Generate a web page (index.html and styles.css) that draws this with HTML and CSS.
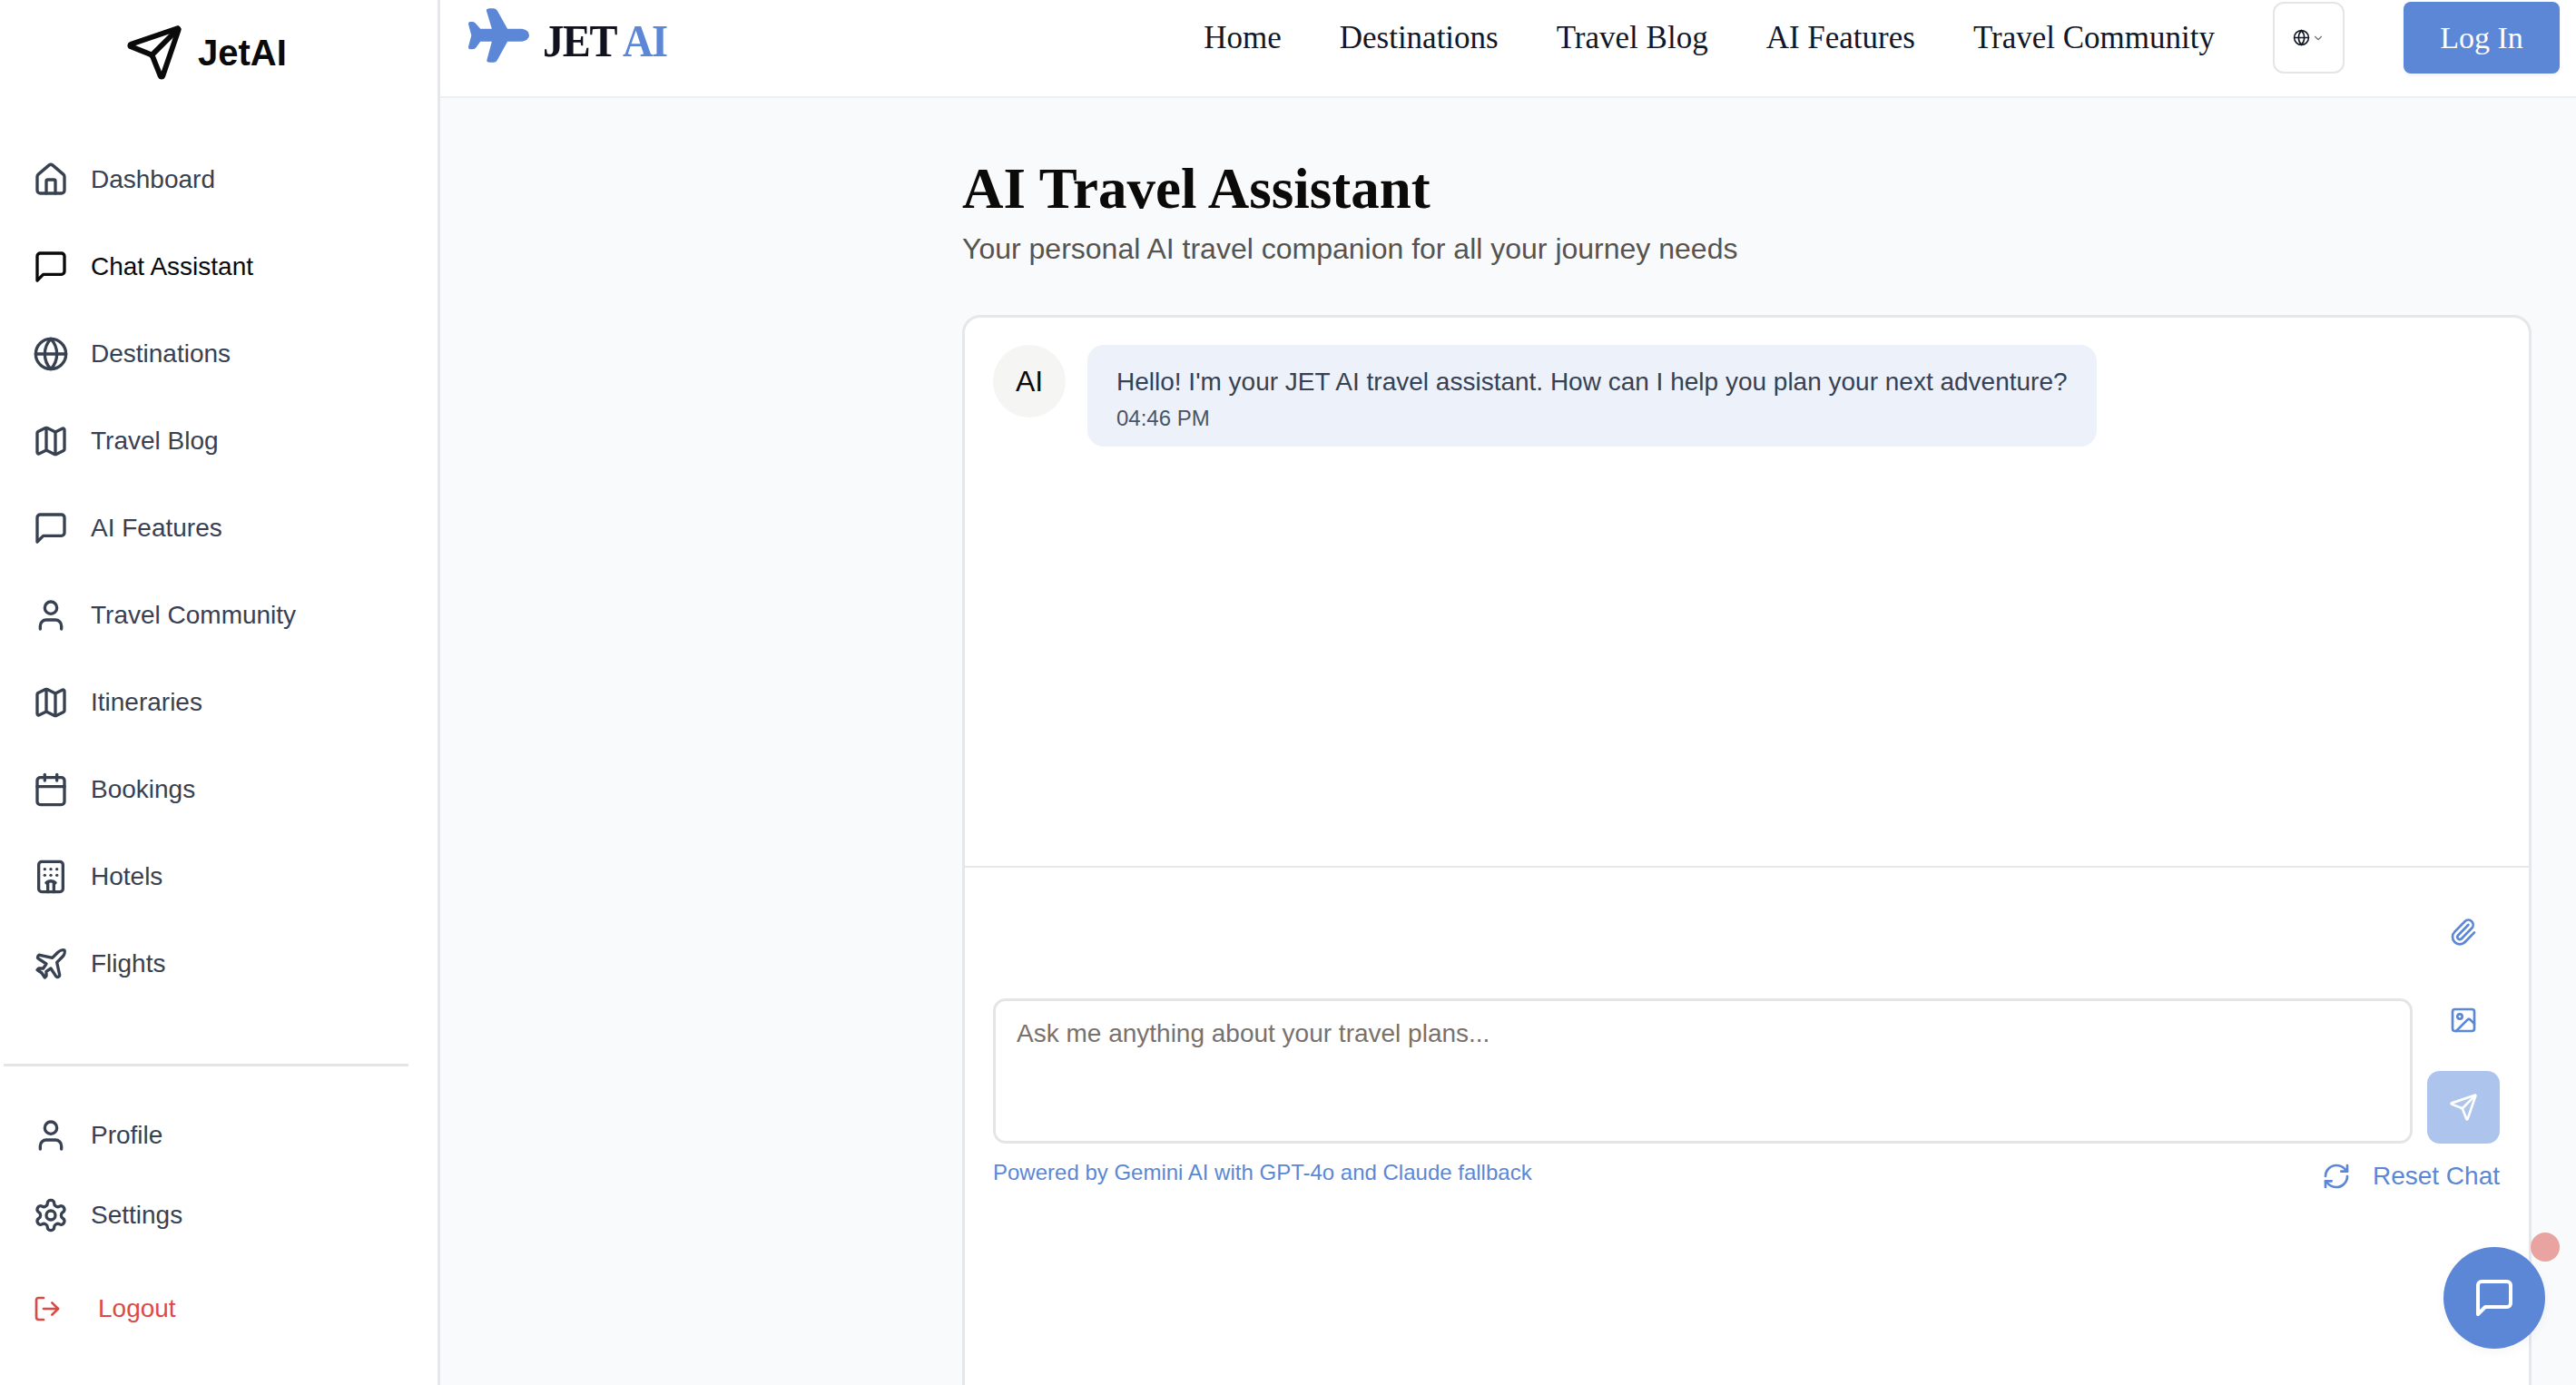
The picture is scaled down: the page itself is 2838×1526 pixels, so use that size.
FILE: index.html
```html
<!DOCTYPE html>
<html>

<head>
    <title>JetAI - Chat Assistant</title>
    <link rel="stylesheet" href="styles.css">
</head>

<body>
    <svg class="sprite" xmlns="http://www.w3.org/2000/svg">
        <symbol id="i-home" viewBox="0 0 24 24"><path d="M15 21v-8a1 1 0 0 0-1-1h-4a1 1 0 0 0-1 1v8"/><path d="M3 10a2 2 0 0 1 .709-1.528l7-5.999a2 2 0 0 1 2.582 0l7 5.999A2 2 0 0 1 21 10v9a2 2 0 0 1-2 2H5a2 2 0 0 1-2-2z"/></symbol>
        <symbol id="i-message" viewBox="0 0 24 24"><path d="M21 15a2 2 0 0 1-2 2H7l-4 4V5a2 2 0 0 1 2-2h14a2 2 0 0 1 2 2z"/></symbol>
        <symbol id="i-globe" viewBox="0 0 24 24"><circle cx="12" cy="12" r="10"/><path d="M12 2a14.5 14.5 0 0 0 0 20 14.5 14.5 0 0 0 0-20"/><path d="M2 12h20"/></symbol>
        <symbol id="i-map" viewBox="0 0 24 24"><path d="M14.106 5.553a2 2 0 0 0 1.788 0l3.659-1.83A1 1 0 0 1 21 4.619v12.764a1 1 0 0 1-.553.894l-4.553 2.277a2 2 0 0 1-1.788 0l-4.212-2.106a2 2 0 0 0-1.788 0l-3.659 1.83A1 1 0 0 1 3 19.381V6.618a1 1 0 0 1 .553-.894l4.553-2.277a2 2 0 0 1 1.788 0z"/><path d="M15 5.764v15"/><path d="M9 3.236v15"/></symbol>
        <symbol id="i-user" viewBox="0 0 24 24"><path d="M19 21v-2a4 4 0 0 0-4-4H9a4 4 0 0 0-4 4v2"/><circle cx="12" cy="7" r="4"/></symbol>
        <symbol id="i-calendar" viewBox="0 0 24 24"><path d="M8 2v4"/><path d="M16 2v4"/><rect width="18" height="18" x="3" y="4" rx="2"/><path d="M3 10h18"/></symbol>
        <symbol id="i-hotel" viewBox="0 0 24 24"><path d="M10 22v-6.57"/><path d="M12 11h.01"/><path d="M12 7h.01"/><path d="M14 15.43V22"/><path d="M15 16a5 5 0 0 0-6 0"/><path d="M16 11h.01"/><path d="M16 7h.01"/><path d="M8 11h.01"/><path d="M8 7h.01"/><rect x="4" y="2" width="16" height="20" rx="2"/></symbol>
        <symbol id="i-plane" viewBox="0 0 24 24"><path d="M17.8 19.2 16 11l3.5-3.5C21 6 21.5 4 21 3c-1-.5-3 0-4.5 1.5L13 8 4.8 6.2c-.5-.1-.9.1-1.1.5l-.3.5c-.2.5-.1 1 .3 1.3L9 12l-2 3H4l-1 1 3 2 2 3 1-1v-3l3-2 3.5 5.3c.3.4.8.5 1.3.3l.5-.2c.4-.3.6-.7.5-1.2z"/></symbol>
        <symbol id="i-settings" viewBox="0 0 24 24"><path d="M12.22 2h-.44a2 2 0 0 0-2 2v.18a2 2 0 0 1-1 1.73l-.43.25a2 2 0 0 1-2 0l-.15-.08a2 2 0 0 0-2.73.73l-.22.38a2 2 0 0 0 .73 2.73l.15.1a2 2 0 0 1 1 1.72v.51a2 2 0 0 1-1 1.74l-.15.09a2 2 0 0 0-.73 2.73l.22.38a2 2 0 0 0 2.73.73l.15-.08a2 2 0 0 1 2 0l.43.25a2 2 0 0 1 1 1.73V20a2 2 0 0 0 2 2h.44a2 2 0 0 0 2-2v-.18a2 2 0 0 1 1-1.73l.43-.25a2 2 0 0 1 2 0l.15.08a2 2 0 0 0 2.73-.73l.22-.39a2 2 0 0 0-.73-2.73l-.15-.08a2 2 0 0 1-1-1.74v-.5a2 2 0 0 1 1-1.74l.15-.09a2 2 0 0 0 .73-2.73l-.22-.38a2 2 0 0 0-2.73-.73l-.15.08a2 2 0 0 1-2 0l-.43-.25a2 2 0 0 1-1-1.73V4a2 2 0 0 0-2-2z"/><circle cx="12" cy="12" r="3"/></symbol>
        <symbol id="i-logout" viewBox="0 0 24 24"><path d="M9 21H5a2 2 0 0 1-2-2V5a2 2 0 0 1 2-2h4"/><path d="m16 17 5-5-5-5"/><path d="M21 12H9"/></symbol>
        <symbol id="i-send" viewBox="0 0 24 24"><path d="M14.536 21.686a.5.5 0 0 0 .937-.024l6.5-19a.496.496 0 0 0-.635-.635l-19 6.5a.5.5 0 0 0-.024.937l7.93 3.18a2 2 0 0 1 1.112 1.11z"/><path d="m21.854 2.147-10.94 10.939"/></symbol>
        <symbol id="i-clip" viewBox="0 0 24 24"><path d="M13.234 20.252 21 12.3"/><path d="m16 6-8.414 8.586a2 2 0 0 0 0 2.828 2 2 0 0 0 2.828 0l8.414-8.586a4 4 0 0 0 0-5.656 4 4 0 0 0-5.656 0l-8.415 8.585a6 6 0 1 0 8.486 8.486"/></symbol>
        <symbol id="i-image" viewBox="0 0 24 24"><rect width="18" height="18" x="3" y="3" rx="2"/><circle cx="9" cy="9" r="2"/><path d="m21 15-3.086-3.086a2 2 0 0 0-2.828 0L6 21"/></symbol>
        <symbol id="i-refresh" viewBox="0 0 24 24"><path d="M3 12a9 9 0 0 1 9-9 9.75 9.75 0 0 1 6.74 2.74L21 8"/><path d="M21 3v5h-5"/><path d="M21 12a9 9 0 0 1-9 9 9.75 9.75 0 0 1-6.74-2.74L3 16"/><path d="M8 16H3v5"/></symbol>
        <symbol id="i-chevron" viewBox="0 0 24 24"><path d="m6 9 6 6 6-6"/></symbol>
    </svg>

    <aside class="sidebar">
        <div class="brand">
            <svg class="icon brand-icon"><use href="#i-send"/></svg>
            <span class="brand-name">JetAI</span>
        </div>

        <nav class="side-nav">
            <a class="side-link"><svg class="icon"><use href="#i-home"/></svg>Dashboard</a>
            <a class="side-link active"><svg class="icon"><use href="#i-message"/></svg>Chat Assistant</a>
            <a class="side-link"><svg class="icon"><use href="#i-globe"/></svg>Destinations</a>
            <a class="side-link"><svg class="icon"><use href="#i-map"/></svg>Travel Blog</a>
            <a class="side-link"><svg class="icon"><use href="#i-message"/></svg>AI Features</a>
            <a class="side-link"><svg class="icon"><use href="#i-user"/></svg>Travel Community</a>
            <a class="side-link"><svg class="icon"><use href="#i-map"/></svg>Itineraries</a>
            <a class="side-link"><svg class="icon"><use href="#i-calendar"/></svg>Bookings</a>
            <a class="side-link"><svg class="icon"><use href="#i-hotel"/></svg>Hotels</a>
            <a class="side-link"><svg class="icon"><use href="#i-plane"/></svg>Flights</a>
        </nav>

        <div class="side-bottom">
            <a class="side-link small"><svg class="icon"><use href="#i-user"/></svg>Profile</a>
            <a class="side-link small"><svg class="icon"><use href="#i-settings"/></svg>Settings</a>
            <a class="logout"><svg class="icon"><use href="#i-logout"/></svg>Logout</a>
        </div>
    </aside>

    <div class="main">
        <header class="topbar">
            <div class="logo">
                <svg class="logo-plane" viewBox="0 0 202 180"><path d="M60 8Q58 0 72 0L84 0Q92 0 96 8L130 68 178 68Q202 72 202 90 202 106 178 110L130 110 96 172Q92 180 84 180L72 180Q58 180 62 170L78 110 40 110 24 132Q20 136 12 136L4 136Q0 136 0 128L10 90 0 52Q0 45 6 45L14 45Q20 45 24 50L40 68 78 68Z"/></svg>
                <span class="logo-text">JET <span class="logo-accent">AI</span></span>
            </div>
            <nav class="top-nav">
                <a>Home</a>
                <a>Destinations</a>
                <a>Travel Blog</a>
                <a>AI Features</a>
                <a>Travel Community</a>
            </nav>
            <button class="lang-btn">
                <svg class="icon lang-globe"><use href="#i-globe"/></svg>
                <svg class="icon lang-chevron"><use href="#i-chevron"/></svg>
            </button>
            <button class="login-btn">Log In</button>
        </header>

        <main class="content">
            <h1>AI Travel Assistant</h1>
            <p class="subtitle">Your personal AI travel companion for all your journey needs</p>

            <section class="chat-card">
                <div class="messages">
                    <div class="avatar">AI</div>
                    <div class="bubble">
                        <p class="bubble-text">Hello! I'm your JET AI travel assistant. How can I help you plan your next adventure?</p>
                        <p class="bubble-time">04:46 PM</p>
                    </div>
                </div>

                <div class="composer">
                    <div class="composer-row">
                        <textarea class="chat-input" placeholder="Ask me anything about your travel plans..."></textarea>
                        <div class="tools">
                            <button class="tool-btn"><svg class="icon"><use href="#i-clip"/></svg></button>
                            <button class="tool-btn"><svg class="icon"><use href="#i-image"/></svg></button>
                            <button class="send-btn"><svg class="icon"><use href="#i-send"/></svg></button>
                        </div>
                    </div>
                    <div class="composer-foot">
                        <span class="powered">Powered by Gemini AI with GPT-4o and Claude fallback</span>
                        <a class="reset"><svg class="icon"><use href="#i-refresh"/></svg>Reset Chat</a>
                    </div>
                </div>
            </section>
        </main>
    </div>

    <button class="chat-fab">
        <svg class="icon"><use href="#i-message"/></svg>
        <span class="fab-badge"></span>
    </button>
</body>

</html>
```

FILE: styles.css
```css
* {
    box-sizing: border-box;
}

body {
    display: flex;
    height: 100vh;
    margin: 0;
    overflow: hidden;
    background-color: #f9fafb;
    font-family: "Liberation Sans", Arial, sans-serif;
    color: #111827;
}

p,
h1 {
    margin: 0;
}

.sprite {
    display: none;
}

.icon {
    flex: none;
    width: 40px;
    height: 40px;
    fill: none;
    stroke: currentColor;
    stroke-width: 2;
    stroke-linecap: round;
    stroke-linejoin: round;
}

/* Sidebar */
.sidebar {
    flex: none;
    width: 485px;
    padding: 0 32px 0 4px;
    background-color: #fff;
    border-right: 3px solid #e5e7eb;
}

.brand {
    display: flex;
    align-items: center;
    height: 116px;
    padding-left: 134px;
    color: #0a0a0a;
}

.brand-icon {
    width: 64px;
    height: 64px;
    stroke-width: 2.2;
}

.brand-name {
    margin-left: 16px;
    font-size: 40px;
    font-weight: bold;
}

.side-nav {
    padding-top: 34px;
    padding-bottom: 62px;
    border-bottom: 3px solid #e5e5e5;
}

.side-link {
    display: flex;
    align-items: center;
    gap: 24px;
    height: 96px;
    padding-left: 32px;
    font-size: 28px;
    color: #374151;
}

.side-link.active {
    color: #0a0a0a;
}

.side-link.small {
    height: 88px;
    padding-bottom: 1px;
}

.side-bottom {
    padding-top: 32px;
}

.logout {
    display: flex;
    align-items: center;
    gap: 40px;
    margin-top: 43px;
    padding-left: 32px;
    font-size: 28px;
    color: #dc4a45;
}

.logout .icon {
    width: 32px;
    height: 32px;
}

/* Top bar */
.main {
    flex: 1;
    min-width: 0;
    display: flex;
    flex-direction: column;
}

.topbar {
    flex: none;
    display: flex;
    align-items: flex-start;
    height: 108px;
    padding: 2px 18px 0 31px;
    background-color: #fff;
    border-bottom: 2px solid #eff0f3;
}

.logo {
    display: flex;
    align-items: flex-start;
    padding-top: 7px;
}

.logo-plane {
    width: 67px;
    height: 60px;
    fill: #5b87d6;
}

.logo-text {
    margin-left: 15px;
    padding-top: 11px;
    font-family: "Liberation Serif", "Times New Roman", serif;
    font-size: 50px;
    line-height: 50px;
    font-weight: bold;
    letter-spacing: -1.5px;
    color: #11121f;
    transform: scaleX(0.93);
    transform-origin: left center;
}

.logo-accent {
    color: #5b87d6;
}

.top-nav {
    display: flex;
    gap: 64px;
    margin-left: auto;
    height: 79px;
    padding-top: 1px;
    align-items: center;
    font-family: "Liberation Serif", "Times New Roman", serif;
    font-size: 35px;
    color: #111827;
}

.lang-btn {
    display: flex;
    align-items: center;
    justify-content: center;
    gap: 2px;
    width: 79px;
    height: 79px;
    margin-left: 64px;
    padding: 0;
    background-color: #fff;
    border: 2px solid #e5e5e5;
    border-radius: 12px;
    color: #111827;
}

.lang-globe {
    width: 19px;
    height: 19px;
}

.lang-chevron {
    width: 14px;
    height: 14px;
    color: #78716c;
}

.login-btn {
    width: 172px;
    height: 79px;
    margin-left: 65px;
    background-color: #5b87d6;
    border: 0;
    border-radius: 8px;
    box-shadow: 0 2px 4px rgba(0, 0, 0, 0.06);
    font-family: "Liberation Serif", "Times New Roman", serif;
    font-size: 34px;
    color: #fff;
}

/* Chat page */
.content {
    flex: 1;
    min-height: 0;
    padding: 58px 49px 0 575px;
}

h1 {
    font-family: "Liberation Serif", "Times New Roman", serif;
    font-size: 63px;
    line-height: 84px;
    font-weight: bold;
    color: #0c0a09;
}

.subtitle {
    margin-top: 2px;
    font-size: 32px;
    line-height: 44px;
    color: #57534e;
}

.chat-card {
    height: 1400px;
    margin-top: 51px;
    background-color: #fff;
    border: 3px solid #e5e7eb;
    border-radius: 20px;
}

.messages {
    display: flex;
    align-items: flex-start;
    gap: 24px;
    height: 606px;
    padding: 30px 31px 0;
    border-bottom: 2px solid #e5e7eb;
}

.avatar {
    flex: none;
    display: flex;
    align-items: center;
    justify-content: center;
    width: 80px;
    height: 80px;
    border-radius: 50%;
    background-color: #f5f5f4;
    font-size: 32px;
    color: #0c0a09;
}

.bubble {
    padding: 21px 32px 0;
    width: 1112px;
    height: 112px;
    border-radius: 18px;
    background-color: #edf1fa;
}

.bubble-text {
    font-size: 28px;
    line-height: 40px;
    white-space: nowrap;
    color: #374151;
}

.bubble-time {
    margin-top: 4px;
    font-size: 24px;
    line-height: 32px;
    color: #4b5563;
}

.composer {
    padding: 22px 32px 0 31px;
}

.composer-row {
    display: flex;
    align-items: flex-end;
    gap: 16px;
}

.chat-input {
    flex: 1;
    min-width: 0;
    height: 160px;
    padding: 16px 24px 16px 23px;
    background-color: #fff;
    border: 3px solid #e5e5e5;
    border-radius: 14px;
    font-family: "Liberation Sans", Arial, sans-serif;
    font-size: 28px;
    line-height: 40px;
    resize: none;
}

.chat-input::placeholder {
    color: #78716c;
    opacity: 1;
}

.tools {
    flex: none;
    display: flex;
    flex-direction: column;
    align-items: center;
    width: 80px;
}

.tool-btn {
    display: flex;
    align-items: center;
    justify-content: center;
    width: 80px;
    height: 97px;
    padding: 0;
    background: none;
    border: 0;
    color: #5b87d6;
}

.tool-btn .icon {
    width: 32px;
    height: 32px;
}

.send-btn {
    display: flex;
    align-items: center;
    justify-content: center;
    width: 80px;
    height: 80px;
    margin-top: 8px;
    padding: 0;
    background-color: #adc4ec;
    border: 0;
    border-radius: 14px;
    color: #fff;
}

.send-btn .icon {
    width: 32px;
    height: 32px;
}

.composer-foot {
    display: flex;
    justify-content: space-between;
    align-items: flex-start;
    margin-top: 16px;
}

.powered {
    font-size: 24px;
    line-height: 32px;
    color: #5b87d6;
}

.reset {
    display: flex;
    align-items: center;
    gap: 24px;
    font-size: 28px;
    line-height: 40px;
    color: #5b87d6;
}

.reset .icon {
    width: 32px;
    height: 32px;
}

/* Floating chat button */
.chat-fab {
    position: fixed;
    left: 2692px;
    top: 1374px;
    display: flex;
    align-items: center;
    justify-content: center;
    width: 112px;
    height: 112px;
    padding: 0;
    background-color: #5b87d6;
    border: 0;
    border-radius: 50%;
    box-shadow: 0 4px 12px rgba(0, 0, 0, 0.04);
    color: #fff;
}

.chat-fab .icon {
    width: 48px;
    height: 48px;
}

.fab-badge {
    position: absolute;
    top: -16px;
    right: -16px;
    width: 32px;
    height: 32px;
    border-radius: 50%;
    background-color: #e9a3a0;
}
```
